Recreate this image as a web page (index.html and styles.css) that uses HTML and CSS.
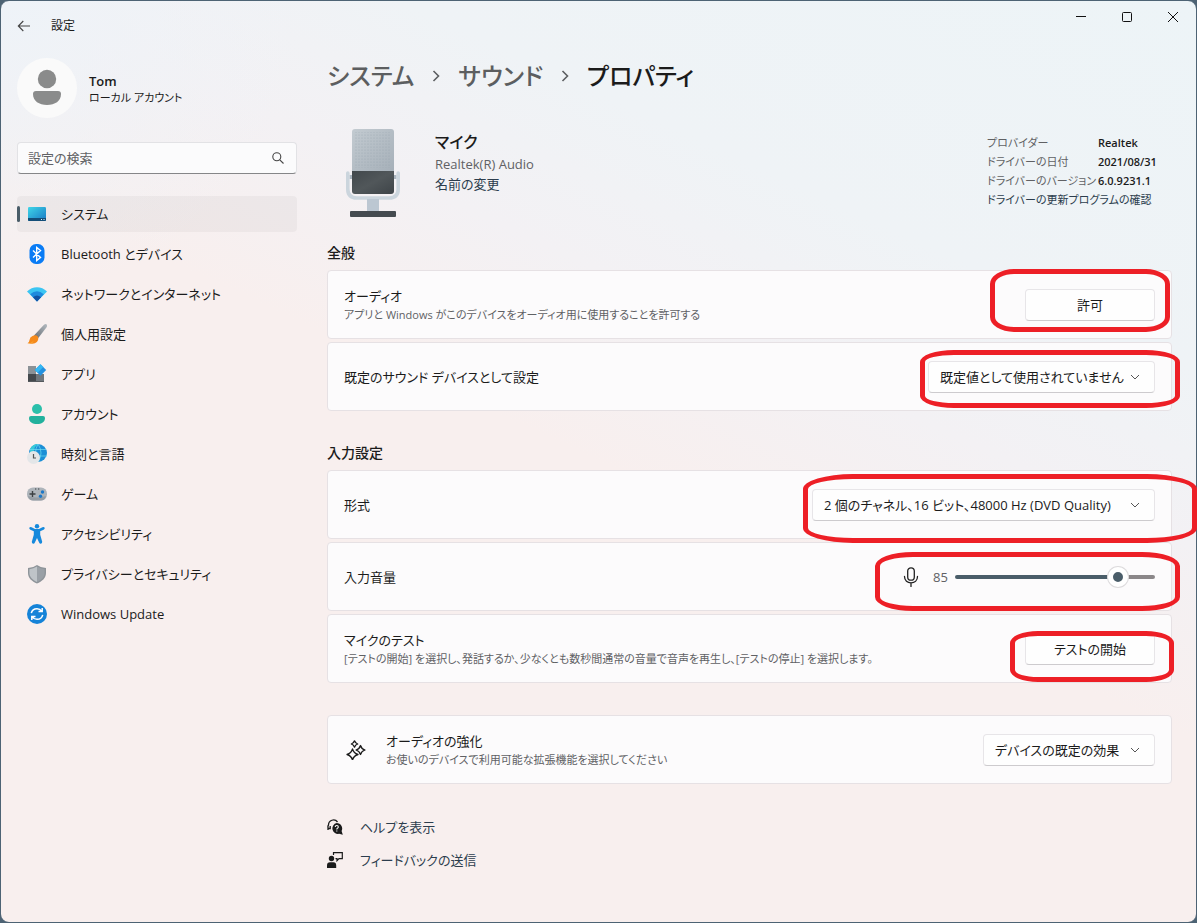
FILE: index.html
```html
<!DOCTYPE html>
<html lang="ja">
<head>
<meta charset="utf-8">
<title>設定</title>
<link rel="stylesheet" href="styles.css">
</head>
<body>
<div class="window">
  <header class="titlebar">
    <button class="back" aria-label="戻る"><svg width="14" height="12" viewBox="0 0 14 12" fill="none" stroke="#444" stroke-width="1.1"><path d="M13 6H1.5M6.3 1 1.3 6l5 5"/></svg></button>
    <span class="app-name">設定</span>
    <div class="controls">
      <button aria-label="最小化"><svg width="12" height="12" viewBox="0 0 12 12" stroke="#111"><path d="M1 5.500h10"/></svg></button>
      <button aria-label="最大化"><svg width="12" height="12" viewBox="0 0 12 12" fill="none" stroke="#111"><rect x="1.500" y="1.500" width="9" height="9" rx="1"/></svg></button>
      <button aria-label="閉じる"><svg width="12" height="12" viewBox="0 0 12 12" stroke="#111"><path d="m1 1 10 10M11 1 1 11"/></svg></button>
    </div>
  </header>

  <div class="body">
    <aside class="sidebar">
      <div class="account">
        <svg class="avatar" viewBox="0 0 60 60"><circle cx="30" cy="30" r="30" fill="#fafafa"/><circle cx="30" cy="21" r="9.200" fill="#8a8b8b"/><path d="M19 33h22q3 0 3 3c0 7-6 11-14 11s-14-4-14-11q0-3 3-3z" fill="#8a8b8b"/></svg>
        <div>
          <div class="user">Tom</div>
          <div class="user-type">ローカル アカウント</div>
        </div>
      </div>
      <div class="search">
        <input type="search" placeholder="設定の検索" aria-label="設定の検索">
        <svg width="12" height="12" viewBox="0 0 12 12" fill="none" stroke="#444" stroke-width="1.100"><circle cx="4.800" cy="4.800" r="4"/><path d="m7.800 7.800 3.700 3.700"/></svg>
      </div>
      <nav class="nav">
        <a href="#" class="current"><svg viewBox="0 0 20 20"><defs><linearGradient id="scr" x2="1" y2="1"><stop stop-color="#3fd6e8"/><stop offset="1" stop-color="#1878c4"/></linearGradient></defs><rect x="1" y="3" width="18" height="14" rx="1.200" fill="url(#scr)"/><path d="M1 14h18v2q0 1-1 1H2q-1 0-1-1z" fill="#134e78"/><path d="M14 15.500h1M16.500 15.500h1" stroke="#d8f3ff"/></svg>システム</a>
        <a href="#"><svg viewBox="0 0 20 20"><rect x="2.500" width="15" height="20" rx="6.500" fill="#0a7cf5"/><path d="m6 6.500 7.500 7-3.800 3V3.500l3.800 3-7.500 7" fill="none" stroke="#fff" stroke-width="1.400"/></svg>Bluetooth とデバイス</a>
        <a href="#"><svg viewBox="0 0 20 20"><path d="M0 7.500C5.500 1.800 14.500 1.800 20 7.500L10 17.500z" fill="#3cc5f2"/><path d="M3.200 10.300q6.800-6 13.600 0L10 17.500z" fill="#1f8add"/><path d="M6 13.200q4-3.200 8 0l-4 4.300z" fill="#1253a4"/></svg>ネットワークとインターネット</a>
        <a href="#"><svg viewBox="0 0 20 20"><defs><linearGradient id="hd" x1="1" x2="0" y2="1"><stop stop-color="#b5bbc1"/><stop offset="1" stop-color="#626970"/></linearGradient></defs><path d="M7 11.500 16.500 1.200Q18.800-.6 19.700.6t-.5 3.200L10.500 15z" fill="url(#hd)"/><path d="M5.500 12q3.500-1.600 5.500.8c1 3-.7 6.200-4.200 6.700Q3.500 20 .5 19.300q1.800-.8 2-3.300Q2.800 13 5.500 12z" fill="#f58a1c"/><path d="M1 19.300q4 .1 5.500-2.800Q6 20 1 19.300z" fill="#fdb53a"/></svg>個人用設定</a>
        <a href="#"><svg viewBox="0 0 20 20"><rect x="1" y="2" width="8" height="8" fill="#8b9196"/><rect x="1" y="10" width="8" height="8" fill="#45494d"/><rect x="9" y="10" width="8" height="8" fill="#6f767c"/><path d="M1 17h16v1H1z" fill="#55595d"/><path d="M13.500.3 19.200 6l-5.700 5.700L7.800 6z" fill="#2491e0"/><path d="M13.500.3 7.800 6l2.800 2.800 5.700-5.700z" fill="#35b8f3"/></svg>アプリ</a>
        <a href="#"><svg viewBox="0 0 20 20"><circle cx="10" cy="5" r="5" fill="#2bbfaa"/><path d="M4 12h12q2 0 2 2c0 4-3.500 6-8 6s-8-2-8-6q0-2 2-2z" fill="#22b19d"/></svg>アカウント</a>
        <a href="#"><svg viewBox="0 0 20 20"><circle cx="11" cy="9" r="9" fill="#1c8fd6"/><path d="M3 5a9 9 0 0 1 8-5q-3 2-4 6t-4 3z" fill="#37c9d9"/><path d="M11 0q-5 9 0 18M11 0q6 9 0 18M3 5.500h16M3 12h17" fill="none" stroke="#6fdcf0" stroke-width=".7"/><circle cx="6.500" cy="13.500" r="6.500" fill="#e4e6e8"/><path d="M6.500 10v4H9" fill="none" stroke="#555" stroke-width="1.200"/></svg>時刻と言語</a>
        <a href="#"><svg viewBox="0 0 20 20"><rect y="3.500" width="20" height="13" rx="6" fill="#aeb4ba"/><path d="M1 12q9 3 18 0-1 4.500-5 4.500H6Q2 16.500 1 12z" fill="#969da4"/><path d="M5.500 7v6M2.500 10h6" stroke="#3c4043" stroke-width="1.400"/><path d="M8 5h1.300M11 5h1.300" stroke="#3c4043"/><circle cx="15.500" cy="8" r="1.700" fill="#1c78c8"/><circle cx="13.500" cy="12.300" r="1.700" fill="#1c78c8"/></svg>ゲーム</a>
        <a href="#"><svg viewBox="0 0 20 20"><circle cx="10" cy="2.200" r="2.200" fill="#1689dc"/><path d="M2.600 3.300q-1 1.800.8 2.500l3.400 1.500v3.500l-2 7q0 1.700 1.200 2 1.300.2 1.900-1.300L10 14l2.100 4.500q.6 1.500 1.900 1.300 1.200-.3 1.200-2l-2-7V7.300l3.400-1.500q1.800-.7.8-2.500-.8-.7-2 0L12 4.900H8L4.600 3.300q-1.200-.6-2 0z" fill="#1689dc"/></svg>アクセシビリティ</a>
        <a href="#"><svg viewBox="0 0 20 20"><path d="M10 1q4 3 9 3v5c0 5-4 8.500-9 10.500C5 17.500 1 14 1 9V4q5 0 9-3z" fill="#8e9499"/><path d="M10 2.500q3.500 2.400 7.600 2.700V9c0 4-3.200 7-7.600 9z" fill="#9aa0a6"/><path d="M10 2.500Q6.500 4.900 2.400 5.200V9c0 4 3.200 7 7.600 9z" fill="#bfc4c8"/></svg>プライバシーとセキュリティ</a>
        <a href="#"><svg viewBox="0 0 20 20"><circle cx="10" cy="10" r="10" fill="#1583d8"/><path d="M4.300 9.200C5 6 7.500 4.700 10 4.700q3 0 4.700 2.500M15.700 10.800C15 14 12.500 15.300 10 15.300q-3 0-4.700-2.500M15.200 4v3.600h-3.700M4.800 16v-3.600h3.700" fill="none" stroke="#fff" stroke-width="1.500"/></svg>Windows Update</a>
      </nav>
    </aside>

    <main class="main">
      <h1 class="crumbs">
        <a href="#">システム</a>
        <svg width="8" height="12" viewBox="0 0 8 12" fill="none" stroke="#5c5e60" stroke-width="1.600"><path d="m1.500 1 5 5-5 5"/></svg>
        <a href="#">サウンド</a>
        <svg width="8" height="12" viewBox="0 0 8 12" fill="none" stroke="#5c5e60" stroke-width="1.600"><path d="m1.500 1 5 5-5 5"/></svg>
        <span>プロパティ</span>
      </h1>

      <section class="device">
        <svg class="mic" viewBox="0 0 54 90">
          <defs>
            <linearGradient id="top" x2="1" y2="1"><stop stop-color="#c3cbd1"/><stop offset="1" stop-color="#a6b0b9"/></linearGradient>
            <linearGradient id="low" x2="1" y2="1"><stop stop-color="#42484c"/><stop offset=".5" stop-color="#51575a"/><stop offset="1" stop-color="#3e4448"/></linearGradient>
            <pattern id="dots" width="3" height="3" patternUnits="userSpaceOnUse"><circle cx="1" cy="1" r=".6" fill="#8b98a4"/></pattern>
          </defs>
          <path d="M3.500 49h4M46.500 49h4" stroke="#aab5bf" stroke-width="4"/>
          <path d="M1.800 45v16q0 9 9 9h32.400q9 0 9-9V45" fill="none" stroke="#cbd5dd" stroke-width="3.600" stroke-linecap="round"/>
          <rect x="21" y="71" width="12" height="13" fill="#bcc7d2"/>
          <path d="M6 43V4q0-3 3-3h36q3 0 3 3v39z" fill="url(#top)"/>
          <path d="M9 4h36v36H9z" fill="url(#dots)" opacity=".6"/>
          <path d="M6 43h42v20q0 3-3 3H9q-3 0-3-3z" fill="url(#low)"/>
          <rect x="4" y="83" width="46" height="6" rx="1" fill="#454b50"/>
        </svg>
        <div class="device-text">
          <h2>マイク</h2>
          <p>Realtek(R) Audio</p>
          <a href="#">名前の変更</a>
        </div>
        <div class="driver">
          <dl>
            <dt>プロバイダー</dt><dd>Realtek</dd>
            <dt>ドライバーの日付</dt><dd>2021/08/31</dd>
            <dt>ドライバーのバージョン</dt><dd>6.0.9231.1</dd>
          </dl>
          <a href="#">ドライバーの更新プログラムの確認</a>
        </div>
      </section>

      <section class="group">
        <h3>全般</h3>
        <div class="card">
          <div class="label"><div>オーディオ</div><p>アプリと Windows がこのデバイスをオーディオ用に使用することを許可する</p></div>
          <div class="field"><button class="btn">許可</button><span class="mark mark-allow"></span></div>
        </div>
        <div class="card">
          <label class="label" for="default">既定のサウンド デバイスとして設定</label>
          <div class="field">
            <select id="default" class="w-default"><option>既定値として使用されていません</option></select>
            <svg class="chev" viewBox="0 0 10 6"><path d="m1 1 4 4 4-4"/></svg>
            <span class="mark mark-default"></span>
          </div>
        </div>
      </section>

      <section class="group">
        <h3>入力設定</h3>
        <div class="card">
          <label class="label" for="format">形式</label>
          <div class="field">
            <select id="format" class="w-format"><option>2 個のチャネル、16 ビット、48000 Hz (DVD Quality)</option></select>
            <svg class="chev" viewBox="0 0 10 6"><path d="m1 1 4 4 4-4"/></svg>
            <span class="mark mark-format"></span>
          </div>
        </div>
        <div class="card">
          <label class="label" for="volume">入力音量</label>
          <div class="field volume">
            <svg width="16" height="20" viewBox="0 0 16 20" fill="none" stroke="#222" stroke-width="1.300" stroke-linecap="round"><rect x="4.700" y=".8" width="6.600" height="12.400" rx="3.300"/><path d="M1.500 9.500c0 4 3 6.300 6.500 6.300s6.500-2.300 6.500-6.300M8 16v3.400"/></svg>
            <output for="volume">85</output>
            <input id="volume" type="range" min="0" max="100" value="85">
            <span class="mark mark-volume"></span>
          </div>
        </div>
        <div class="card">
          <div class="label"><div>マイクのテスト</div><p>[テストの開始] を選択し、発話するか、少なくとも数秒間通常の音量で音声を再生し、[テストの停止] を選択します。</p></div>
          <div class="field"><button class="btn">テストの開始</button><span class="mark mark-test"></span></div>
        </div>
      </section>

      <section class="group extra">
        <div class="card">
          <svg class="sparkle" width="20" height="20" viewBox="0 0 20 20" fill="none" stroke="#1b1b1b" stroke-width="1.300" stroke-linejoin="round"><path d="M6.500 9Q7.700 13.300 12 14.500 7.700 15.700 6.500 20 5.300 15.700 1 14.500 5.300 13.300 6.500 9z"/><path d="M14.500 5.500q1 3.500 4.500 4.500-3.500 1-4.500 4.500-1-3.500-4.500-4.500 3.500-1 4.500-4.500z"/><path d="M8.500.8Q9.300 3.200 11.700 4 9.300 4.800 8.500 7.200 7.700 4.800 5.300 4 7.700 3.200 8.500.8z"/></svg>
          <label class="label" for="effects"><span>オーディオの強化</span><small>お使いのデバイスで利用可能な拡張機能を選択してください</small></label>
          <div class="field">
            <select id="effects" class="w-effects"><option>デバイスの既定の効果</option></select>
            <svg class="chev" viewBox="0 0 10 6"><path d="m1 1 4 4 4-4"/></svg>
          </div>
        </div>
      </section>

      <footer class="links">
        <a href="#"><svg viewBox="0 0 16 16"><path d="M1 11V8.500A3 3 0 0 1 1.500 6 5 5 0 0 1 10.500 3M.7 9.500h2.500V7" fill="none" stroke="#1b1b1b" stroke-width="1.300"/><path d="M9.700 4a5.500 5.500 0 0 1 4.900 8l1.200 3.800-3.700-1A5.500 5.500 0 1 1 9.700 4z" fill="#1b1b1b"/><path d="M8.200 8q.1-1.500 1.600-1.500T11.300 8q0 .8-.9 1.200-.6.400-.6 1.200M9.800 11.400v1.100" fill="none" stroke="#fff" stroke-width="1.100"/></svg>ヘルプを表示</a>
        <a href="#"><svg viewBox="0 0 16 16"><circle cx="4.500" cy="6.500" r="2.700" fill="#1b1b1b"/><path d="M0 16v-2.500Q0 10.300 3 10.300h3.500q2.700 0 2.700 3.200V16z" fill="#1b1b1b"/><path d="M6.500 3V.7h8.800v6H12l-2 2v-2H8.500" fill="none" stroke="#1b1b1b" stroke-width="1.200"/></svg>フィードバックの送信</a>
      </footer>
    </main>
  </div>
</div>
</body>
</html>
```
FILE: styles.css
```css
* { box-sizing: border-box; margin: 0; padding: 0; }

body {
  background: #4d6374;
  color: #1b1b1b;
  font: 13px/20px "Open Sans", "Noto Sans CJK JP", sans-serif;
  font-feature-settings: "palt";
}

button, input, select { font: inherit; font-feature-settings: inherit; color: inherit; }
button { border: 0; background: none; }
a { color: inherit; text-decoration: none; }

.window {
  min-height: 100vh;
  border: 1px solid #4d6374;
  border-radius: 9px;
  background:
    radial-gradient(circle at 0 0, #eef3f8 0, #eef3f800 300px),
    linear-gradient(205deg, #edf4f7 0%, #eff3f6 25%, #f3f1f4 37%, #f8efee 50%);
}

.titlebar { display: flex; align-items: center; height: 50px; padding-left: 16px; }
.back { display: flex; width: 34px; }
.app-name { font-size: 12px; }
.controls { display: flex; align-self: flex-start; margin-left: auto; }
.controls button { display: flex; align-items: center; justify-content: center; width: 46px; height: 32px; }

.body { display: grid; grid-template-columns: 280px minmax(0, 1fr); gap: 30px; padding: 0 24px 0 16px; }

.account { display: flex; align-items: center; gap: 12px; padding: 7px 0 24px; }
.avatar { width: 60px; height: 60px; }
.user { font-weight: 600; line-height: 18px; padding-top: 2px; }
.user-type { font-size: 11px; line-height: 16px; }

.search { position: relative; }
.search input {
  width: 100%; height: 32px; padding: 0 40px 0 10px;
  border: 1px solid #e2e2e5; border-bottom-color: #858688; border-radius: 4px;
  background: #fbfbfc; outline: 0; appearance: none;
}
.search input::placeholder { color: #606164; opacity: 1; }
.search svg { position: absolute; right: 13px; top: 10px; }

.nav { display: grid; gap: 4px; margin-top: 22px; }
.nav a { position: relative; display: flex; align-items: center; gap: 14px; height: 36px; padding-left: 10px; border-radius: 4px; }
.nav svg { width: 20px; height: 20px; flex: none; }
.nav .current { background: #00000009; }
.nav .current::before { content: ""; position: absolute; left: 0; top: 10px; width: 3px; height: 16px; border-radius: 2px; background: #4a5d69; }

.crumbs { display: flex; align-items: center; gap: 18px; height: 50px; font-size: 24px; font-weight: 500; line-height: 36px; white-space: nowrap; }
.crumbs a { color: #5c5e60; }

.device { display: flex; padding: 27px 0 25px 19px; }
.mic { width: 54px; height: 90px; }
.device-text { flex: 1; padding: 2px 0 0 35px; }
.device-text h2 { font-size: 16px; font-weight: 500; line-height: 24px; }
.device-text p { color: #606164; }
.device-text a, .driver a, .links a { color: #2c3d4d; }
.driver { width: 185px; padding-top: 5px; font-size: 11px; line-height: 19px; white-space: nowrap; }
.driver dl { display: grid; grid-template-columns: 111px 1fr; }
.driver dt { color: #606164; }
.driver dd { font-weight: 600; }

.group { display: grid; gap: 3px; margin-bottom: 32px; }
.group h3 { font-size: 14px; font-weight: 500; line-height: 20px; padding-bottom: 4px; }
.card {
  display: flex; align-items: center; justify-content: space-between;
  min-height: 69px; padding: 0 16px;
  border: 1px solid #e6e1e4; border-radius: 4px; background: #fcfbfc;
}
.label p, .label small { display: block; color: #606164; font-size: 11px; line-height: 18px; }
.sparkle { margin: 0 20px 0 2px; }
.sparkle + .label { flex: 1; }

.field { position: relative; display: flex; align-items: center; }
.btn, .field select {
  height: 32px; border: 1px solid #e7e5e8; border-bottom-color: #cdcbce;
  border-radius: 4px; background: #fefefe;
}
.btn { width: 130px; }
.field select { appearance: none; padding: 0 30px 0 11px; }
.w-default { width: 227px; }
.w-format { width: 343px; }
.w-effects { width: 172px; }
.chev { position: absolute; right: 15px; width: 10px; height: 6px; fill: none; stroke: #555; pointer-events: none; }

.volume output { width: 22px; margin: 0 0 0 14px; color: #606164; }
.volume input { appearance: none; width: 200px; height: 20px; background: none; }
.volume input::-webkit-slider-runnable-track {
  height: 4px; border-radius: 2px;
  background: linear-gradient(90deg, #4a5d69 82%, #8b8789 82%);
}
.volume input::-webkit-slider-thumb {
  appearance: none; width: 20px; height: 20px; margin-top: -8px;
  border: 5px solid #fff; border-radius: 50%; background: #4a5d69;
  box-shadow: 0 0 0 1px #dddbdd;
}

.mark { position: absolute; border: 5px solid #ed1f26; pointer-events: none; }
.mark-allow { inset: -20px -15px -11px -35px; border-radius: 24px / 15px; }
.mark-default { inset: -11px -25px -15px -8px; border-radius: 34px / 12px; }
.mark-format { inset: -15px -42px -22px -9px; border-radius: 50px / 15px; }
.mark-volume { inset: -15px -25px -24px -28px; border-radius: 38px / 14px; }
.mark-test { inset: -2px -19px -17px -15px; border-radius: 28px / 12px; }

.links { display: grid; gap: 13px; justify-items: start; padding: 1px 0 24px; }
.links a { display: flex; align-items: center; gap: 17px; }
.links svg { width: 16px; height: 16px; }
```
